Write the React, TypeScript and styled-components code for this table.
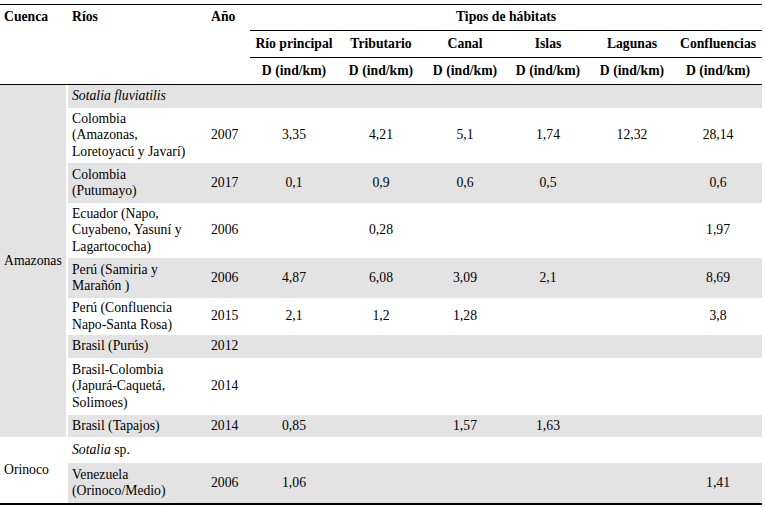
import React from "react";
import styled, { createGlobalStyle } from "styled-components";

const GlobalStyle = createGlobalStyle`
  html, body {
    margin: 0;
    padding: 0;
    background: #fff;
  }
  body {
    font-family: "Liberation Serif", "Times New Roman", serif;
    color: #000;
  }
`;

const SHADE = "#e3e3e3";

type Row = {
  river: string[];
  year: string;
  values: string[];
  h: number;
  shade: boolean;
};

type Section = {
  basin: string;
  basinShade: boolean;
  species: React.ReactNode;
  speciesH: number;
  speciesShade: boolean;
  rows: Row[];
};

const sections: Section[] = [
  {
    basin: "Amazonas",
    basinShade: true,
    species: <i>Sotalia fluviatilis</i>,
    speciesH: 23,
    speciesShade: true,
    rows: [
      {
        river: ["Colombia", "(Amazonas,", "Loretoyacú y Javarí)"],
        year: "2007",
        values: ["3,35", "4,21", "5,1", "1,74", "12,32", "28,14"],
        h: 55,
        shade: false,
      },
      {
        river: ["Colombia", "(Putumayo)"],
        year: "2017",
        values: ["0,1", "0,9", "0,6", "0,5", "", "0,6"],
        h: 40,
        shade: true,
      },
      {
        river: ["Ecuador (Napo,", "Cuyabeno, Yasuní y", "Lagartococha)"],
        year: "2006",
        values: ["", "0,28", "", "", "", "1,97"],
        h: 55,
        shade: false,
      },
      {
        river: ["Perú (Samiria y", "Marañón )"],
        year: "2006",
        values: ["4,87", "6,08", "3,09", "2,1", "", "8,69"],
        h: 40,
        shade: true,
      },
      {
        river: ["Perú (Confluencia", "Napo-Santa Rosa)"],
        year: "2015",
        values: ["2,1", "1,2", "1,28", "", "", "3,8"],
        h: 37,
        shade: false,
      },
      {
        river: ["Brasil (Purús)"],
        year: "2012",
        values: ["", "", "", "", "", ""],
        h: 23,
        shade: true,
      },
      {
        river: ["Brasil-Colombia", "(Japurá-Caquetá,", "Solimoes)"],
        year: "2014",
        values: ["", "", "", "", "", ""],
        h: 57,
        shade: false,
      },
      {
        river: ["Brasil (Tapajos)"],
        year: "2014",
        values: ["0,85", "", "1,57", "1,63", "", ""],
        h: 22,
        shade: true,
      },
    ],
  },
  {
    basin: "Orinoco",
    basinShade: false,
    species: (
      <>
        <i>Sotalia</i> sp.
      </>
    ),
    speciesH: 26,
    speciesShade: false,
    rows: [
      {
        river: ["Venezuela", "(Orinoco/Medio)"],
        year: "2006",
        values: ["1,06", "", "", "", "", "1,41"],
        h: 40,
        shade: true,
      },
    ],
  },
];

const habitats = [
  "Río principal",
  "Tributario",
  "Canal",
  "Islas",
  "Lagunas",
  "Confluencias",
];

const colWidths = [68, 139, 43, 88, 86, 82, 84, 84, 88];

const App = () => {
  return (
    <>
      <GlobalStyle />
      <Page>
        <Table>
          <colgroup>
            {colWidths.map((w, i) => (
              <Col key={i} $w={w} />
            ))}
          </colgroup>
          <thead>
            <TRow $h={26}>
              <HeadCell rowSpan={3} $align="left" $top $rule>
                Cuenca
              </HeadCell>
              <HeadCell rowSpan={3} $align="left" $top $rule>
                Ríos
              </HeadCell>
              <HeadCell rowSpan={3} $align="left" $top $rule>
                Año
              </HeadCell>
              <HeadCell colSpan={6} $align="center" $rule>
                Tipos de hábitats
              </HeadCell>
            </TRow>
            <TRow $h={27}>
              {habitats.map((h) => (
                <HeadCell key={h} $align="center" $rule>
                  {h}
                </HeadCell>
              ))}
            </TRow>
            <TRow $h={27}>
              {habitats.map((h) => (
                <HeadCell key={h} $align="center" $rule>
                  D (ind/km)
                </HeadCell>
              ))}
            </TRow>
          </thead>
          <tbody>
            {sections.map((s) => (
              <React.Fragment key={s.basin}>
                <TRow $h={s.speciesH}>
                  <BasinCell rowSpan={s.rows.length + 1} $shade={s.basinShade}>
                    {s.basin}
                  </BasinCell>
                  <SpeciesCell colSpan={8} $shade={s.speciesShade}>
                    {s.species}
                  </SpeciesCell>
                </TRow>
                {s.rows.map((r) => (
                  <TRow key={r.river.join(" ")} $h={r.h}>
                    <Cell $shade={r.shade} $align="left">
                      {r.river.map((line, i) => (
                        <Line key={i}>{line}</Line>
                      ))}
                    </Cell>
                    <Cell $shade={r.shade} $align="left">
                      {r.year}
                    </Cell>
                    {r.values.map((v, i) => (
                      <Cell key={i} $shade={r.shade} $align="center">
                        {v}
                      </Cell>
                    ))}
                  </TRow>
                ))}
              </React.Fragment>
            ))}
          </tbody>
        </Table>
      </Page>
    </>
  );
};

export default App;

const Page = styled.div`
  width: 765px;
  padding-top: 4px;
`;

// tables don't inherit the font in quirks mode, so set it here too
const Table = styled.table`
  width: 762px;
  table-layout: fixed;
  border-collapse: separate;
  border-spacing: 0;
  border-top: 1px solid #000;
  border-bottom: 2px solid #000;
  font-family: "Liberation Serif", "Times New Roman", serif;
  font-size: 13.7px;
  line-height: 16.5px;
  color: #000;
`;

const Col = styled.col<{ $w: number }>`
  width: ${(p) => p.$w}px;
`;

const TRow = styled.tr<{ $h: number }>`
  height: ${(p) => p.$h}px;
`;

const HeadCell = styled.th<{ $align: string; $top?: boolean; $rule?: boolean }>`
  font-weight: bold;
  padding: ${(p) => (p.$top ? "4px 4px 0" : "0 4px")};
  text-align: ${(p) => p.$align};
  vertical-align: ${(p) => (p.$top ? "top" : "middle")};
  border-bottom: ${(p) => (p.$rule ? "1px solid #000" : "none")};
  white-space: nowrap;
`;

const BasinCell = styled.td<{ $shade: boolean }>`
  padding: 0 4px;
  background: ${(p) => (p.$shade ? SHADE : "#fff")};
  border-right: 2px solid #fff;
  vertical-align: middle;
  text-align: left;
`;

const SpeciesCell = styled.td<{ $shade: boolean }>`
  padding: 0 4px;
  background: ${(p) => (p.$shade ? SHADE : "#fff")};
  vertical-align: middle;
`;

const Cell = styled.td<{ $shade: boolean; $align: string }>`
  padding: 0 4px;
  background: ${(p) => (p.$shade ? SHADE : "#fff")};
  text-align: ${(p) => p.$align};
  vertical-align: middle;
  white-space: nowrap;
`;

const Line = styled.div`
  display: block;
`;
